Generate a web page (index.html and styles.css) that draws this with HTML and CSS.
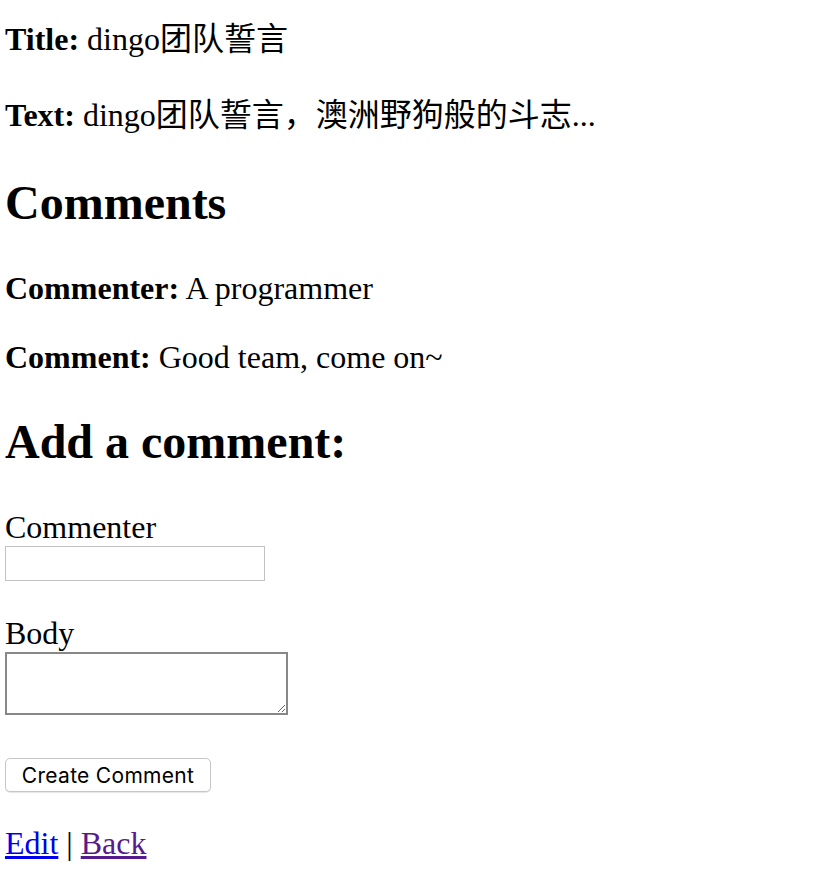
FILE: index.html
```html
<!DOCTYPE html>
<html lang="zh">

<head>
    <meta charset="utf-8">
    <title>dingo</title>
    <link rel="stylesheet" href="styles.css">
</head>

<body>

    <p class="first">
        <strong>Title:</strong>
        dingo团队誓言
    </p>

    <p class="second">
        <strong>Text:</strong>
        dingo团队誓言，澳洲野狗般的斗志...
    </p>

    <h2>Comments</h2>

    <p>
        <strong>Commenter:</strong>
        A programmer
    </p>

    <p>
        <strong>Comment:</strong>
        Good team, come on~
    </p>

    <h2 class="add">Add a comment:</h2>

    <form action="#" class="new_comment">
        <p>
            <label for="comment_commenter">Commenter</label><br>
            <input type="text" id="comment_commenter" class="field_text">
        </p>
        <p>
            <label for="comment_body">Body</label><br>
            <textarea id="comment_body" class="field_area"></textarea>
        </p>
        <p class="actions">
            <button type="button" class="submit">Create Comment</button>
        </p>
    </form>

    <a href="#" class="link">Edit</a> |
    <a href="#" class="link visited">Back</a>

</body></html>
```

FILE: styles.css
```css
body {
    margin: 0 0 0 5px;
    font-family: "Liberation Serif", "Noto Sans CJK SC", serif;
    font-size: 32px;
    color: #000;
}

p {
    margin: 32px 0;
}

.first {
    margin-top: 13px;
    margin-bottom: 0;
}

.second {
    margin-top: 30px;
}

h2 {
    font-size: 48px;
    margin: 40px 0;
}

.add {
    margin-top: 38px;
}

form {
    margin: 0;
}

.field_text {
    box-sizing: border-box;
    width: 260px;
    height: 35px;
    margin: 0;
    border: 1px solid #c2c2c2;
    vertical-align: top;
}

.field_area {
    box-sizing: border-box;
    width: 283px;
    height: 63px;
    margin: 0;
    border: 2px solid #888;
    vertical-align: top;
}

.actions {
    margin-bottom: 33px;
}

.submit {
    box-sizing: border-box;
    width: 206px;
    height: 34px;
    margin: 11px 0 0;
    padding: 0;
    background: #fff;
    border: 1px solid #c6c6c6;
    border-radius: 5px;
    box-shadow: 0 1px 1px rgba(0, 0, 0, 0.1);
    font-family: Inter, "Liberation Sans", sans-serif;
    font-size: 21px;
    letter-spacing: 0.3px;
    color: #000;
    vertical-align: top;
}

.link {
    color: #0000ee;
}

.visited {
    color: #551a8b;
}
```
